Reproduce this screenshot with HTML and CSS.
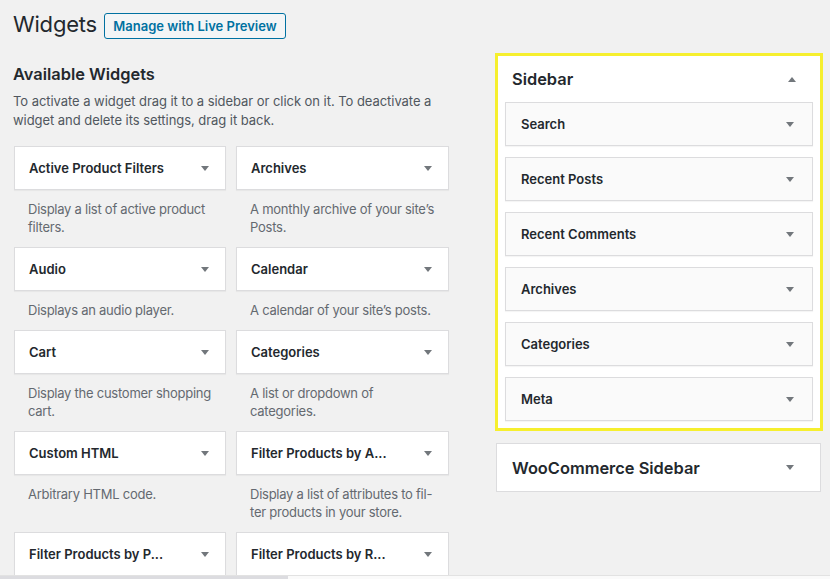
FILE: index.html
```html
<!DOCTYPE html>
<html>
<head>
<meta charset="utf-8">
<link rel="stylesheet" href="styles.css">
</head>
<body>
<div class="wrap">
  <div class="header">
    <h1 class="title">Widgets</h1>
    <a class="btn">Manage with Live Preview</a>
  </div>
  <div class="columns">
    <div class="left">
      <h2 class="avail">Available Widgets</h2>
      <p class="intro">To activate a widget drag it to a sidebar or click on it. To deactivate a widget and delete its settings, drag it back.</p>
      <div class="grid">
        <div class="item"><div class="card"><span>Active Product Filters</span><i class="arr"></i></div><div class="desc">Display a list of active product filters.</div></div>
        <div class="item"><div class="card"><span>Archives</span><i class="arr"></i></div><div class="desc">A monthly archive of your site’s Posts.</div></div>
        <div class="item"><div class="card"><span>Audio</span><i class="arr"></i></div><div class="desc">Displays an audio player.</div></div>
        <div class="item"><div class="card"><span>Calendar</span><i class="arr"></i></div><div class="desc">A calendar of your site’s posts.</div></div>
        <div class="item"><div class="card"><span>Cart</span><i class="arr"></i></div><div class="desc">Display the customer shopping cart.</div></div>
        <div class="item"><div class="card"><span>Categories</span><i class="arr"></i></div><div class="desc">A list or dropdown of categories.</div></div>
        <div class="item"><div class="card"><span>Custom HTML</span><i class="arr"></i></div><div class="desc">Arbitrary HTML code.</div></div>
        <div class="item"><div class="card"><span>Filter Products by A...</span><i class="arr"></i></div><div class="desc"><span class="nw">Display a list of attributes to fil-</span> ter products in your store.</div></div>
        <div class="item"><div class="card"><span>Filter Products by P...</span><i class="arr"></i></div></div>
        <div class="item"><div class="card"><span>Filter Products by R...</span><i class="arr"></i></div></div>
      </div>
    </div>
    <div class="right">
      <div class="area active">
        <div class="area-head"><h2 class="area-title">Sidebar</h2><i class="arr up"></i></div>
        <div class="area-list">
          <div class="wcard"><span>Search</span><i class="arr"></i></div>
          <div class="wcard"><span>Recent Posts</span><i class="arr"></i></div>
          <div class="wcard"><span>Recent Comments</span><i class="arr"></i></div>
          <div class="wcard"><span>Archives</span><i class="arr"></i></div>
          <div class="wcard"><span>Categories</span><i class="arr"></i></div>
          <div class="wcard"><span>Meta</span><i class="arr"></i></div>
        </div>
      </div>
      <div class="area closed">
        <h2 class="area-title">WooCommerce Sidebar</h2><i class="arr"></i>
      </div>
    </div>
  </div>
</div>
<div class="scrollbar"><div class="thumb"></div></div>
</body>
</html>
```
FILE: styles.css
```css
html, body {
  margin: 0;
  padding: 0;
  height: 579px;
  overflow: hidden;
}
body {
  background: #f1f1f1;
  font-family: Inter, "Noto Sans", "Liberation Sans", sans-serif;
  color: #23282d;
  font-size: 13px;
}
.wrap {
  padding: 10px 0 0 13px;
}
.header {
  display: flex;
  align-items: center;
  gap: 7px;
  height: 29px;
}
.title {
  margin: 0;
  font-size: 22px;
  font-weight: 400;
  letter-spacing: -0.2px;
  line-height: 29px;
  color: #23282d;
}
.btn {
  display: inline-block;
  box-sizing: border-box;
  height: 26px;
  width: 182px;
  border: 1px solid #0071a1;
  border-radius: 3px;
  background: #f3f5f6;
  color: #0071a1;
  font-size: 13px;
  font-weight: 600;
  line-height: 24px;
  text-align: center;
  margin-top: 2px;
}
.columns {
  display: flex;
  gap: 45px;
  margin-top: 14px;
}
.left {
  width: 437px;
}
.avail {
  margin: 10px 0 0;
  font-size: 16.4px;
  font-weight: 600;
  line-height: 22px;
}
.intro {
  margin: 7px 0 16px;
  line-height: 19px;
  color: #50575e;
  width: 430px;
  letter-spacing: -0.05px;
}
.grid {
  display: grid;
  grid-template-columns: 212px 213px;
  column-gap: 10px;
  margin-left: 1px;
}
.card, .wcard {
  box-sizing: border-box;
  height: 44px;
  border: 1px solid #dcdcde;
  background: #fff;
  display: flex;
  align-items: center;
  justify-content: space-between;
  padding: 0 16px 0 14px;
  font-weight: 600;
  box-shadow: 0 1px 1px rgba(0,0,0,0.04);
}
.desc {
  padding: 10px 14px 11px 14px;
  line-height: 18px;
  color: #646970;
  letter-spacing: -0.25px;
}
.nw {
  white-space: nowrap;
}
.arr {
  display: block;
  width: 0;
  height: 0;
  border-left: 4px solid transparent;
  border-right: 4px solid transparent;
  border-top: 5px solid #72777c;
}
.arr.up {
  border-top: 0;
  border-bottom: 5px solid #72777c;
}
.right {
  width: 328px;
}
.area {
  background: #fff;
  box-sizing: border-box;
}
.active {
  border: 3px solid #f6ef2e;
}
.area-head {
  height: 46px;
  display: flex;
  align-items: center;
  justify-content: space-between;
  padding: 0 24px 0 14px;
}
.area-title {
  margin: 0;
  font-size: 16.4px;
  font-weight: 600;
  line-height: 22px;
}
.area-list {
  display: flex;
  flex-direction: column;
  gap: 11px;
  padding: 0 7px 7px;
}
.wcard {
  background: #fafafa;
  padding: 0 18px 0 15px;
}
.closed {
  margin: 12px 2px 0 1px;
  height: 49px;
  border: 1px solid #dcdcde;
  display: flex;
  align-items: center;
  justify-content: space-between;
  padding: 0 26px 0 15px;
}
.scrollbar {
  position: fixed;
  left: 0;
  right: 0;
  bottom: 0;
  height: 3px;
  background: #fafafa;
  border-top: 1px solid #e2e2e2;
}
.thumb {
  width: 288px;
  height: 3px;
  background: #dcdce0;
}
```
